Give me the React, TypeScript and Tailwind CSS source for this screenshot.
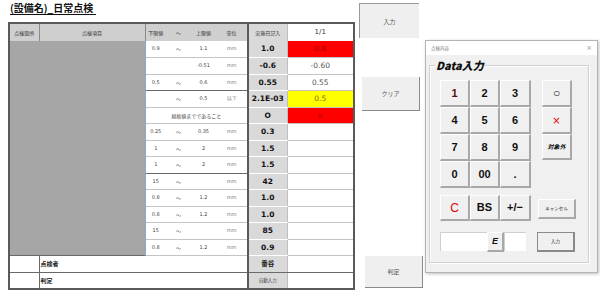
import type {ReactNode} from 'react';

type Row = {
	lo?: string;
	t?: string;
	hi?: string;
	u?: string;
	span?: string;
	v: string;
	r?: string;
	rc?: 'red' | 'yellow' | 'plain';
	dark?: boolean;
};

const rows: Row[] = [
	{lo: '0.9', t: '～', hi: '1.1', u: 'mm', v: '1.0', r: '0.8', rc: 'red'},
	{hi: '-0.51', u: 'mm', v: '-0.6', r: '-0.60', rc: 'plain'},
	{lo: '0.5', t: '～', hi: '0.6', u: 'mm', v: '0.55', r: '0.55', rc: 'plain', dark: true},
	{t: '～', hi: '0.5', u: '以下', v: '2.1E-03', r: '0.5', rc: 'yellow'},
	{span: '規格値までであること', v: 'O', r: '×', rc: 'red'},
	{lo: '0.25', t: '～', hi: '0.35', u: 'mm', v: '0.3'},
	{lo: '1', t: '～', hi: '2', u: 'mm', v: '1.5'},
	{lo: '1', t: '～', hi: '2', u: 'mm', v: '1.5', dark: true},
	{lo: '15', t: '～', u: 'mm', v: '42'},
	{lo: '0.8', t: '～', hi: '1.2', u: 'mm', v: '1.0'},
	{lo: '0.8', t: '～', hi: '1.2', u: 'mm', v: '1.0'},
	{lo: '15', t: '～', u: 'mm', v: '85'},
	{lo: '0.8', t: '～', hi: '1.2', u: 'mm', v: '0.9'},
];

const small = 'text-[5px] text-[#444] text-center';

const SheetButton = ({label, className}: {label: string; className: string}) => (
	<div
		className={`flex items-center justify-center bg-[#efefef] text-[6px] text-[#555] ${className}`}
	>
		{label}
	</div>
);

const Key = ({children, className = ''}: {children: ReactNode; className?: string}) => (
	<div
		className={`flex items-center justify-center bg-[#f0f0f0] border-t border-l border-white border-r-2 border-b-2 border-r-[#a8a8a8] border-b-[#a8a8a8] ${className}`}
	>
		{children}
	</div>
);

const Sheet = () => (
	<table className="table-fixed border-collapse border-2 border-[#5a5a5a] w-[345px]">
		<colgroup>
			<col className="w-[30px]" />
			<col className="w-[106px]" />
			<col className="w-[21px]" />
			<col className="w-[25px]" />
			<col className="w-[25px]" />
			<col className="w-[32px]" />
			<col className="w-[39px]" />
			<col className="w-[67px]" />
		</colgroup>
		<tbody>
			<tr className="h-[18px]">
				<td className="bg-[#cfcfcf] border-r border-[#8a8a8a] text-[5px] text-[#333] text-center">点検箇所</td>
				<td className="bg-[#cfcfcf] border-r border-[#8a8a8a] text-[5px] text-[#333] text-center">点検項目</td>
				<td className="bg-[#cfcfcf] text-[5px] text-[#333] text-center">下限値</td>
				<td className="bg-[#cfcfcf] text-[5px] text-[#333] text-center">～</td>
				<td className="bg-[#cfcfcf] text-[5px] text-[#333] text-center">上限値</td>
				<td className="bg-[#cfcfcf] text-[5px] text-[#333] text-center">単位</td>
				<td className="bg-[#d9d9d9] border-l-2 border-[#5a5a5a] border-r border-r-[#bfbfbf] text-[5px] text-[#333] text-center">
					実施日記入
				</td>
				<td className="bg-white text-[7px] text-[#333] text-center font-['DejaVu_Sans']">1/1</td>
			</tr>
			{rows.map((row, i) => {
				const line = row.dark ? 'border-b border-[#6a6a6a]' : 'border-b border-[#c4c4c4]';
				const rBg =
					row.rc === 'red'
						? 'bg-[#ff0000] text-[#a00000]'
						: row.rc === 'yellow'
							? 'bg-[#ffff00] text-[#8a6a00]'
							: 'bg-white text-[#555]';
				return (
					<tr key={i} className="h-[16.5px]">
						{i === 0 && (
							<td
								colSpan={2}
								rowSpan={rows.length}
								className="bg-[#a6a6a6] border-r border-[#8fa6c0]"
							/>
						)}
						{row.span ? (
							<td colSpan={4} className={`${small} ${line}`}>
								{row.span}
							</td>
						) : (
							<>
								<td className={`${small} ${line} font-['DejaVu_Sans']`}>{row.lo}</td>
								<td className={`${small} ${line}`}>{row.t}</td>
								<td className={`${small} ${line} font-['DejaVu_Sans']`}>{row.hi}</td>
								<td className={`${small} ${line} text-[#777] font-['DejaVu_Sans']`}>{row.u}</td>
							</>
						)}
						<td className="bg-[#d9d9d9] border-l-2 border-[#5a5a5a] border-b border-b-white border-r border-r-[#bfbfbf] text-center text-[7.5px] font-bold text-[#111] font-['DejaVu_Sans']">
							{row.v}
						</td>
						<td className={`${rBg} border-b border-[#c4c4c4] text-center text-[7.5px] font-['DejaVu_Sans']`}>
							{row.r}
						</td>
					</tr>
				);
			})}
			<tr className="h-[16.5px] border-t border-[#6a6a6a]">
				<td className="border-r border-[#6a6a6a] border-b border-b-[#6a6a6a]" />
				<td colSpan={5} className="border-b border-[#6a6a6a] text-[6px] font-bold text-[#222] pl-[1px]">
					点検者
				</td>
				<td className="bg-[#d9d9d9] border-l-2 border-[#5a5a5a] border-b border-b-[#6a6a6a] border-r border-r-[#bfbfbf] text-center text-[6.5px] font-bold text-[#222]">
					番谷
				</td>
				<td className="bg-white border-b border-[#6a6a6a]" />
			</tr>
			<tr className="h-[16.5px]">
				<td className="border-r border-[#6a6a6a]" />
				<td colSpan={5} className="text-[6px] font-bold text-[#222] pl-[1px]">
					判定
				</td>
				<td className="bg-[#d9d9d9] border-l-2 border-[#5a5a5a] border-r border-r-[#bfbfbf] text-center text-[4.5px] text-[#444]">
					自動入力
				</td>
				<td className="bg-white" />
			</tr>
		</tbody>
	</table>
);

const Dialog = () => (
	<div className="mt-[40px] w-[173px] h-[233px] bg-[#f0f0f0] border border-[#b4b4b4] shadow-[1px_1px_3px_rgba(0,0,0,0.25)] flex flex-col">
		<div className="h-[14px] bg-white flex items-center justify-between px-[5px]">
			<span className="text-[4.5px] text-[#777]">点検内容</span>
			<span className="text-[7px] text-[#999] font-['DejaVu_Sans']">×</span>
		</div>
		<div className="relative mt-[10px] ml-[3px] w-[160px] h-[198px] border border-[#d0d0d0] shadow-[inset_1px_1px_0_#fff,1px_1px_0_#fff]">
			<span className="absolute -top-[7px] left-[5px] bg-[#f0f0f0] px-[1px] text-[11px] leading-[12px] font-black italic text-[#111]">
				Data入力
			</span>
			<div className="pl-[10px] pt-[14px] flex flex-col font-['Liberation_Sans'] text-[11px] font-bold text-[#111]">
				<div className="flex">
					<div className="grid grid-cols-[30px_30px_31px] grid-rows-[27px_27px_27px_27px]">
						<Key className="text-[#5a1010]">1</Key>
						<Key>2</Key>
						<Key>3</Key>
						<Key>4</Key>
						<Key>5</Key>
						<Key>6</Key>
						<Key>7</Key>
						<Key>8</Key>
						<Key>9</Key>
						<Key>0</Key>
						<Key>00</Key>
						<Key>.</Key>
					</div>
					<div className="ml-[11px] grid grid-rows-[27px_27px_26px] w-[30px]">
						<Key className="text-[12px] font-normal">○</Key>
						<Key className="text-[#e00000] text-[10px] font-normal font-['DejaVu_Sans']">×</Key>
						<Key className="text-[6px] font-bold italic font-['Noto_Sans_CJK_JP']">対象外</Key>
					</div>
				</div>
				<div className="flex mt-[7px]">
					<div className="grid grid-cols-[30px_30px_31px] h-[26px]">
						<Key className="text-[#e00000] text-[12px] font-normal">C</Key>
						<Key>BS</Key>
						<Key>+/−</Key>
					</div>
					<Key className="ml-[7px] mt-[4px] w-[38px] h-[20px] text-[4.5px] font-normal text-[#333] font-['Noto_Sans_CJK_JP']">
						キャンセル
					</Key>
				</div>
				<div className="flex items-start mt-[11px]">
					<div className="w-[47px] h-[19px] bg-white border-t border-l border-[#cfcfcf]" />
					<Key className="w-[17px] h-[20px] text-[9px] font-bold italic">E</Key>
					<div className="w-[22px] h-[19px] bg-white border-t border-l border-[#cfcfcf]" />
					<div className="ml-[11px] w-[38px] h-[20px] flex items-center justify-center bg-[#f0f0f0] border border-[#8a8a8a] border-r-2 border-b-2 text-[4.5px] font-normal text-[#333] font-['Noto_Sans_CJK_JP']">
						入力
					</div>
				</div>
			</div>
		</div>
	</div>
);

export default function App() {
	return (
		<div className="w-[600px] h-[297px] bg-white flex overflow-hidden font-['Noto_Sans_CJK_JP',sans-serif]">
			<div className="pl-[8px] pt-[2px] w-[355px] shrink-0 flex flex-col">
				<div className="ml-[2px] mb-[7px] w-fit pr-[3px] border-b border-[#111] text-[10px] leading-[12px] font-bold text-[#111]">
					(設備名)_日常点検
				</div>
				<Sheet />
			</div>
			<div className="w-[70px] shrink-0 flex flex-col">
				<SheetButton
					label="入力"
					className="mt-[3px] ml-[4px] w-[60px] h-[35px] border-t border-l border-[#9a9a9a]"
				/>
				<SheetButton
					label="クリア"
					className="mt-[39px] ml-[7px] w-[58px] h-[34px] border-r border-b border-[#8a8a8a]"
				/>
				<SheetButton
					label="判定"
					className="mt-[145px] ml-[10px] w-[58px] h-[32px] border-r border-b border-[#8a8a8a]"
				/>
			</div>
			<Dialog />
		</div>
	);
}
